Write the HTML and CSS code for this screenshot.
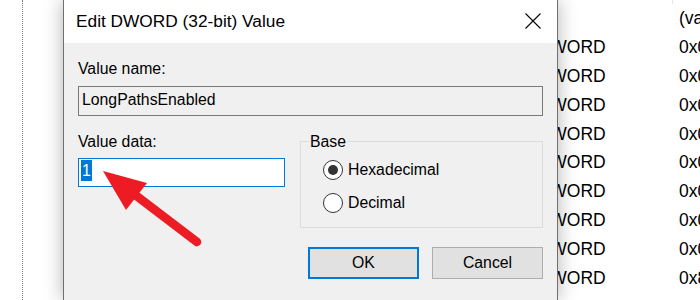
FILE: index.html
```html
<!DOCTYPE html>
<html lang="en">
<head>
    <meta charset="UTF-8" />
    <meta name="viewport" content="width=device-width, initial-scale=1.0" />
    <title>Edit DWORD (32-bit) Value</title>
    <link rel="stylesheet" href="styles.css">
</head>
<body>
    <div class="regedit">
        <div class="tree"><div class="tree-line"></div></div>
        <!-- value list behind the dialog, name column is covered -->
        <div class="values">
            <div class="values-head"><span></span><span class="col-type"></span><span></span></div>
            <div class="value-row"><span></span><span class="col-type narrow">REG_SZ</span><span class="col-data">(value not set)</span></div>
            <div class="value-row"><span></span><span class="col-type">REG_DWORD</span><span class="col-data">0x00000001 (1)</span></div>
            <div class="value-row"><span></span><span class="col-type">REG_DWORD</span><span class="col-data">0x00000000 (0)</span></div>
            <div class="value-row"><span></span><span class="col-type">REG_DWORD</span><span class="col-data">0x00000000 (0)</span></div>
            <div class="value-row"><span></span><span class="col-type">REG_DWORD</span><span class="col-data">0x00000000 (0)</span></div>
            <div class="value-row"><span></span><span class="col-type">REG_DWORD</span><span class="col-data">0x00000000 (0)</span></div>
            <div class="value-row"><span></span><span class="col-type">REG_DWORD</span><span class="col-data">0x00000002 (2)</span></div>
            <div class="value-row"><span></span><span class="col-type">REG_DWORD</span><span class="col-data">0x00000000 (0)</span></div>
            <div class="value-row"><span></span><span class="col-type">REG_DWORD</span><span class="col-data">0x00000000 (0)</span></div>
            <div class="value-row"><span></span><span class="col-type">REG_DWORD</span><span class="col-data">0x80000002 (2147483650)</span></div>
        </div>
    </div>

    <div class="dialog">
        <div class="titlebar">
            <span class="title">Edit DWORD (32-bit) Value</span>
            <svg class="close" width="16" height="16" viewBox="0 0 16 16">
                <path d="M0.5 0.5 L15.5 15.5 M15.5 0.5 L0.5 15.5" stroke="#000" stroke-width="1.1" fill="none" />
            </svg>
        </div>
        <div class="dialog-body">
            <div class="label">Value name:</div>
            <div class="field field-readonly">LongPathsEnabled</div>

            <div class="data-grid">
                <div>
                    <div class="label">Value data:</div>
                    <div class="field field-active"><span class="selected">1</span></div>
                </div>
                <fieldset class="group">
                    <legend>Base</legend>
                    <div class="radios">
                        <div class="radio"><span class="circle"><span class="dot"></span></span>Hexadecimal</div>
                        <div class="radio"><span class="circle"></span>Decimal</div>
                    </div>
                </fieldset>
            </div>

            <div class="buttons">
                <button class="primary">OK</button>
                <button>Cancel</button>
            </div>
        </div>
    </div>

    <!-- red annotation arrow -->
    <svg class="arrow" width="700" height="300" viewBox="0 0 700 300">
        <line x1="197" y1="242" x2="134" y2="194" stroke="#ed1c24" stroke-width="8.5" stroke-linecap="round" />
        <polygon points="103,171 147,183 126,210" fill="#ed1c24" />
    </svg>
</body>
</html>
```

FILE: styles.css
```css
* {
    margin: 0;
    padding: 0;
    box-sizing: border-box;
}

body {
    width: 700px;
    height: 300px;
    overflow: hidden;
    background-color: #fff;
    color: #000;
    font-family: "Liberation Sans", Arial, sans-serif;
    position: relative;
}

.regedit {
    display: flex;
    height: 300px;
}

.tree {
    width: 200px;
    padding-left: 22px;
}

.tree-line {
    height: 100%;
    border-left: 1px dotted #7f7f7f;
}

.values {
    flex: 1;
    font-size: 17.5px;
    white-space: nowrap;
    overflow: hidden;
}

.values-head,
.value-row {
    display: grid;
    grid-template-columns: 290px 183px 1fr;
}

.values-head {
    height: 4px;
}

.values-head .col-type {
    border-right: 1px solid #e5e5e5;
}

.value-row {
    height: 28.9px;
    line-height: 28.9px;
}

.value-row span {
    overflow: hidden;
}

.narrow {
    letter-spacing: -1px;
}

.col-data {
    padding-left: 6px;
}

/* dialog window */
.dialog {
    position: absolute;
    left: 63px;
    top: 0;
    width: 495px;
    height: 300px;
    background-color: #f0f0f0;
    border: 1px solid #707070;
    border-top: none;
    border-bottom: none;
    box-shadow: 0 0 18px rgba(0, 0, 0, 0.3);
    font-size: 15.8px;
}

.titlebar {
    height: 43px;
    background-color: #fff;
    display: flex;
    align-items: flex-start;
    padding: 0 16px 0 12px;
}

.title {
    font-size: 17.3px;
    line-height: 43px;
}

.close {
    margin-left: auto;
    margin-top: 13px;
}

.dialog-body {
    padding: 15.5px 14px 0;
}

.label {
    line-height: 20px;
}

.field {
    margin-top: 7.5px;
    height: 30px;
    border: 1px solid #7a7a7a;
    padding: 0 3px 2px;
    line-height: 26px;
    white-space: nowrap;
}

.field-active {
    margin-top: 6.5px;
    height: 29px;
    background-color: #fff;
    border-color: #0078d7;
    padding: 1px 2px;
    line-height: 21px;
}

.selected {
    display: inline-block;
    background-color: #0078d7;
    color: #fff;
    padding: 0 1px;
    line-height: 21px;
}

.data-grid {
    display: grid;
    grid-template-columns: 207px 1fr;
    column-gap: 15px;
    margin-top: 15.5px;
    align-items: start;
}

.group {
    height: 96.5px;
    min-width: 0;
    border: 1px solid #dcdcdc;
    padding: 0 0 0 8px;
}

.group legend {
    padding: 0 1px;
    line-height: 20px;
}

.radios {
    padding: 6.5px 0 0 14px;
}

.radio {
    display: flex;
    align-items: center;
    gap: 5px;
    height: 24px;
}

.radio + .radio {
    margin-top: 9px;
}

.circle {
    width: 20px;
    height: 20px;
    border: 1px solid #333;
    border-radius: 50%;
    background-color: #fff;
    display: flex;
    align-items: center;
    justify-content: center;
}

.dot {
    width: 10px;
    height: 10px;
    border-radius: 50%;
    background-color: #333;
}

.buttons {
    display: flex;
    justify-content: flex-end;
    gap: 13px;
    margin-top: 19px;
}

button {
    width: 111px;
    height: 32px;
    background-color: #e1e1e1;
    border: 1px solid #adadad;
    font-family: inherit;
    font-size: 15.8px;
    color: #000;
}

button.primary {
    border: 2px solid #0078d7;
}

.arrow {
    position: absolute;
    left: 0;
    top: 0;
    pointer-events: none;
}
```
